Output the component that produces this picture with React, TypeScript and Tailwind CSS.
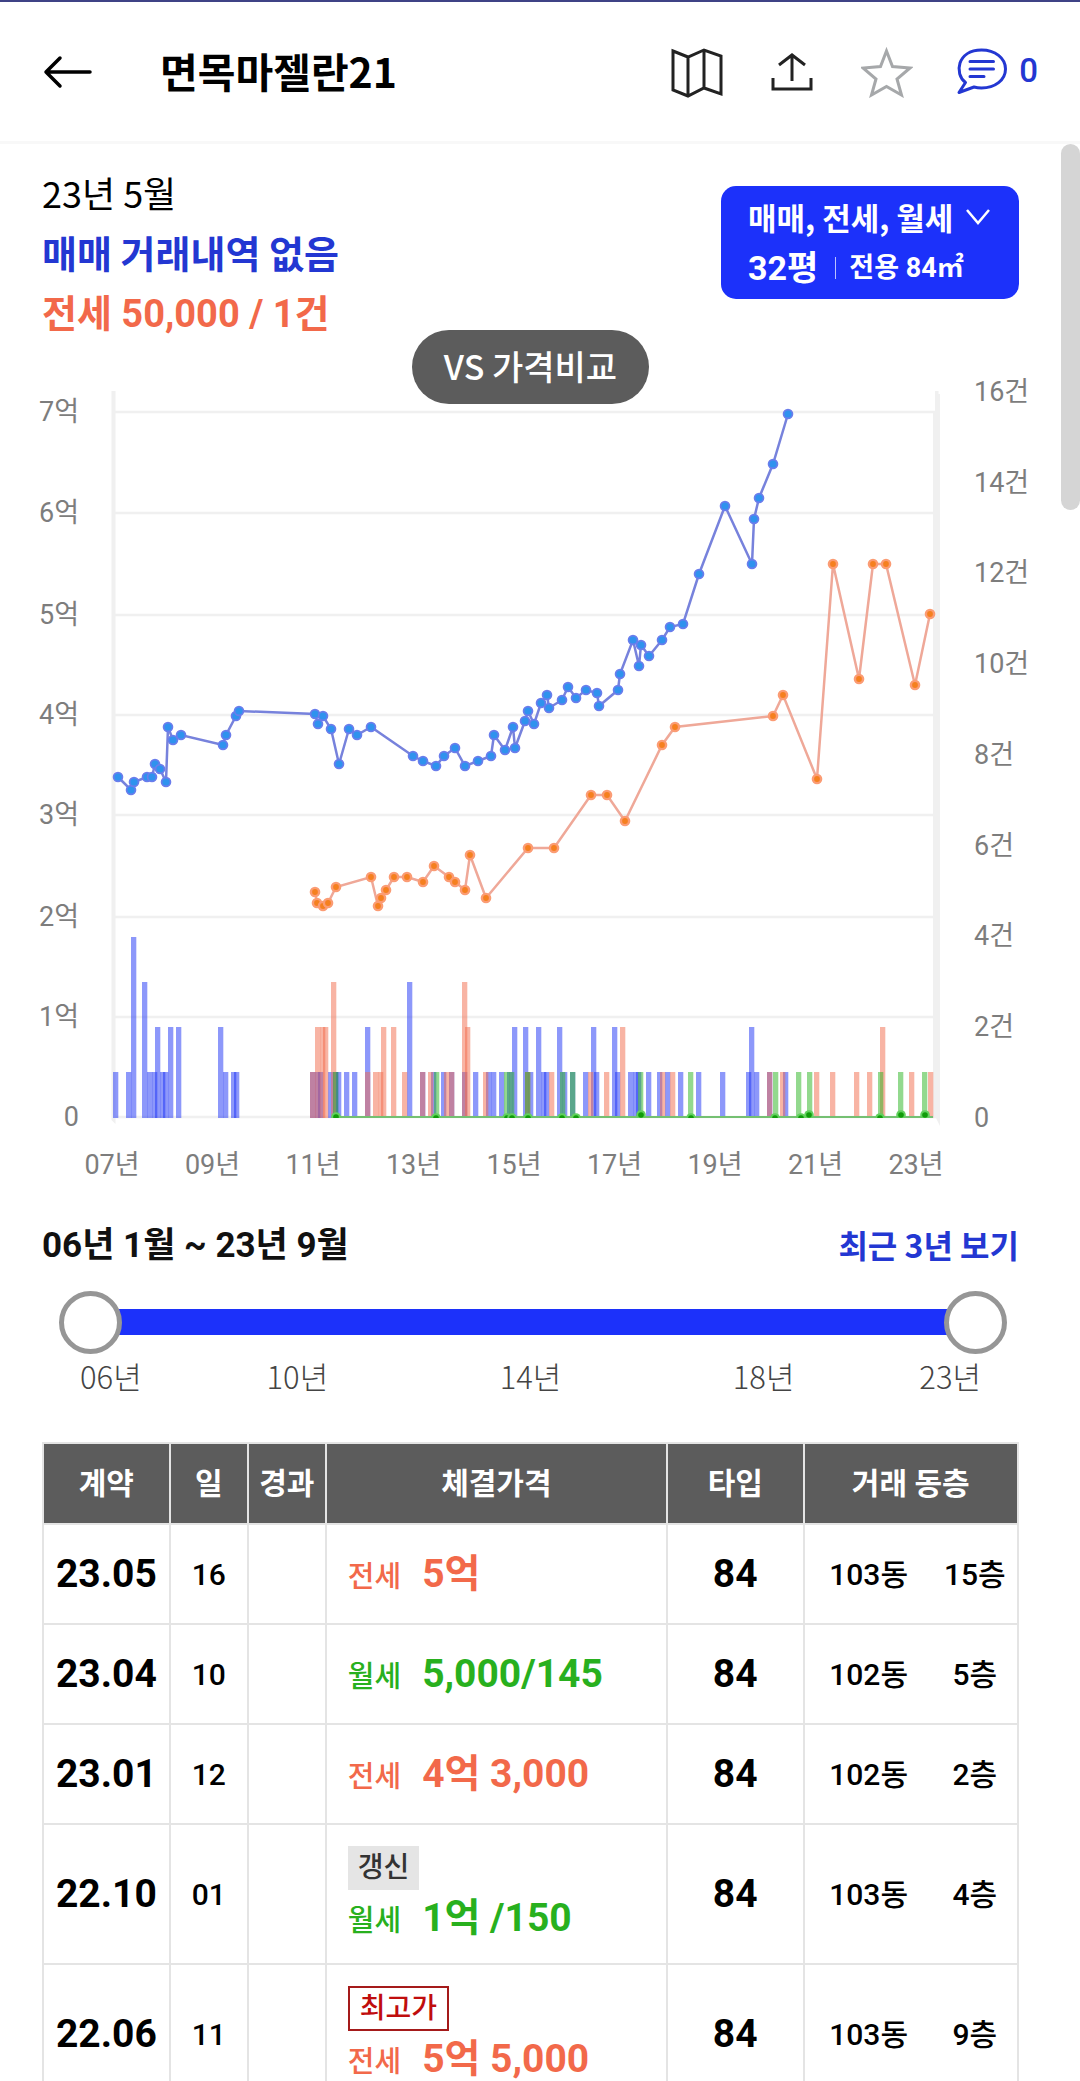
import { useState } from "react";

type Point = [number, number];

const SALE: Point[] = [
  [118, 777], [131, 790], [134, 782], [147, 777], [152, 777], [155, 764], [160, 769], [166, 782],
  [168, 727], [173, 740], [181, 735], [223, 745], [226, 735], [236, 716], [239, 711], [315, 714],
  [318, 724], [323, 716], [331, 729], [339, 764], [349, 729], [357, 735], [371, 727], [413, 756],
  [423, 761], [436, 766], [444, 756], [455, 748], [465, 766], [478, 761], [491, 756], [494, 735],
  [505, 750], [513, 727], [515, 748], [525, 721], [528, 711], [534, 724], [541, 703], [547, 695],
  [549, 708], [562, 700], [568, 687], [576, 698], [586, 690], [597, 693], [599, 706], [618, 690],
  [620, 674], [633, 640], [639, 666], [641, 645], [649, 656], [662, 640], [670, 627], [683, 624],
  [699, 574], [725, 506], [752, 564], [754, 519], [759, 498], [773, 464], [788, 414],
];

const JEONSE: Point[] = [
  [315, 892], [317, 903], [323, 906], [328, 903], [336, 887], [371, 877], [378, 906], [381, 898],
  [386, 890], [394, 877], [407, 877], [423, 882], [434, 866], [449, 877], [455, 882], [465, 890],
  [470, 855], [486, 898], [528, 848], [554, 848], [591, 795], [607, 795], [625, 821], [662, 745],
  [675, 727], [773, 716], [783, 695], [817, 779], [833, 564], [859, 679], [873, 564], [886, 564],
  [915, 685], [930, 614],
];

const MONTHLY: Point[] = [
  [336, 1117], [436, 1118], [507, 1118], [512, 1118], [528, 1118], [562, 1118], [576, 1118],
  [641, 1115], [691, 1118], [775, 1118], [801, 1118], [809, 1115], [880, 1118], [901, 1115], [925, 1115],
];

// [x, number of deals]
const SALE_BARS: Point[] = [
  [113, 1], [126, 1], [131, 4], [142, 3], [147, 1], [152, 1], [155, 2], [160, 1], [163, 1], [168, 2],
  [176, 2], [218, 2], [223, 1], [231, 1], [234, 1], [310, 1], [315, 1], [318, 1], [328, 1], [333, 1],
  [336, 1], [344, 1], [352, 1], [365, 2], [407, 3], [420, 1], [431, 1], [441, 1], [449, 1], [462, 1],
  [473, 1], [486, 1], [491, 1], [499, 1], [507, 1], [512, 2], [523, 2], [528, 1], [536, 2], [541, 1],
  [544, 1], [557, 2], [562, 1], [570, 1], [583, 1], [591, 2], [594, 1], [612, 2], [615, 1], [628, 1],
  [633, 1], [636, 1], [646, 1], [657, 1], [665, 1], [678, 1], [696, 1], [720, 1], [746, 1], [749, 2],
  [754, 1], [767, 1], [783, 1],
];

const JEONSE_BARS: Point[] = [
  [310, 1], [315, 2], [320, 2], [323, 2], [331, 3], [365, 1], [373, 1], [378, 1], [381, 2], [391, 2],
  [402, 1], [420, 1], [428, 1], [444, 1], [449, 1], [462, 3], [465, 2], [483, 1], [525, 1], [549, 1],
  [588, 1], [604, 1], [620, 2], [660, 1], [670, 1], [767, 1], [780, 1], [814, 1], [830, 1], [854, 1],
  [867, 1], [880, 2], [909, 1], [928, 1],
];

const MONTHLY_BARS: Point[] = [
  [333, 1], [434, 1], [504, 1], [509, 1], [525, 1], [560, 1], [570, 1], [638, 1], [688, 1], [773, 1],
  [796, 1], [807, 1], [878, 1], [898, 1], [922, 1],
];

const PRICE_TICKS = [
  { y: 412, label: "7억" },
  { y: 513, label: "6억" },
  { y: 615, label: "5억" },
  { y: 715, label: "4억" },
  { y: 815, label: "3억" },
  { y: 917, label: "2억" },
  { y: 1017, label: "1억" },
  { y: 1117, label: "0" },
];

const COUNT_TICKS = ["16건", "14건", "12건", "10건", "8건", "6건", "4건", "2건", "0"];
const YEAR_TICKS = ["07년", "09년", "11년", "13년", "15년", "17년", "19년", "21년", "23년"];

type Deal = {
  month: string;
  day: string;
  kind: "전세" | "월세";
  price: string;
  badge?: "갱신" | "최고가";
  dong: string;
  floor: string;
};

const DEALS: Deal[] = [
  { month: "23.05", day: "16", kind: "전세", price: "5억", dong: "103동", floor: "15층" },
  { month: "23.04", day: "10", kind: "월세", price: "5,000/145", dong: "102동", floor: "5층" },
  { month: "23.01", day: "12", kind: "전세", price: "4억 3,000", dong: "102동", floor: "2층" },
  { month: "22.10", day: "01", kind: "월세", price: "1억 /150", badge: "갱신", dong: "103동", floor: "4층" },
  { month: "22.06", day: "11", kind: "전세", price: "5억 5,000", badge: "최고가", dong: "103동", floor: "9층" },
];

const ROBOTO = "font-[Roboto,'Noto_Sans_CJK_KR',sans-serif]";

function Header() {
  return (
    <header className="flex h-[144px] shrink-0 items-center border-t-2 border-b-3 border-t-[#3f4386] border-b-[#f8f8f8] pr-[42px] pl-[43px]">
      <button type="button" aria-label="뒤로">
        <svg className="h-10 w-[50px]" viewBox="0 0 50 40" fill="none" stroke="#000" strokeWidth="3.5" strokeLinecap="round" strokeLinejoin="round">
          <path d="M47 20H3M17 6 3 20l14 14" />
        </svg>
      </button>
      <h1 className="ml-[67px] flex-1 pb-1 text-[41px] leading-[60px] font-bold">면목마젤란21</h1>
      <div className="flex items-center gap-[43px]">
        <button type="button" aria-label="지도">
          <svg className="size-[52px]" viewBox="0 0 52 52" fill="none" stroke="#222" strokeWidth="3">
            <path d="M2 5 17 11 33 4 50 10V48L33 42 17 50 2 44ZM17 11V50M33 4V42" />
          </svg>
        </button>
        <button type="button" aria-label="공유">
          <svg className="size-[52px]" viewBox="0 0 52 52" fill="none" stroke="#222" strokeWidth="3">
            <path d="M26 35V9M13 19 26 9 39 19M7 32V43H45V32" />
          </svg>
        </button>
        <button type="button" aria-label="관심단지">
          <svg className="size-[52px]" viewBox="0 0 52 52" fill="none" stroke="#a6a8aa" strokeWidth="3">
            <path d="M25.500 5 31.500 20.500 49 22 36 33 40.500 49 25.500 40.500 10.500 49 15 33 2 22 19.500 20.500Z" />
          </svg>
        </button>
        <button type="button" aria-label="댓글" className="flex items-center gap-[11px] text-[#2337d2]">
          <svg className="size-[52px]" viewBox="0 0 52 52" fill="none" stroke="currentColor" strokeWidth="3" strokeLinejoin="round" strokeLinecap="round">
            <path d="M9.500 36.500C-2 28 1 4 25.500 4C39 4 49.500 12 49.500 23C49.500 34 39 42 25.500 42Q21.500 42 18 41L3 46.500Z" />
            <path d="M14 15.500H37.500M14 23H37.500M14 30.500H28" />
          </svg>
          <span className={`${ROBOTO} pb-0.5 text-[33px] font-medium`}>0</span>
        </button>
      </div>
    </header>
  );
}

function Summary() {
  return (
    <section className="flex items-start justify-between pt-[18px] pr-[61px] pl-[42px]">
      <div className="text-[38px] leading-[60px]">
        <p className="text-[36px]">23년 5월</p>
        <p className="font-bold text-[#2337d2]">매매 거래내역 없음</p>
        <p className={`${ROBOTO} pt-0.5 font-bold text-[#f2694a]`}>전세 50,000 / 1건</p>
      </div>
      <button type="button" className="mt-6 flex h-[113px] w-[298px] flex-col justify-center rounded-[15px] bg-[#1c31fa] pl-[27px] text-left text-white">
        <span className="flex items-center gap-3 text-[31px] leading-[50px] font-bold">
          매매, 전세, 월세
          <svg className="h-[18px] w-[26px]" viewBox="0 0 26 18" fill="none" stroke="#fff" strokeWidth="2.500">
            <path d="M2 2 13 15 24 2" />
          </svg>
        </span>
        <span className={`${ROBOTO} flex items-center text-[34px] leading-[52px] font-bold`}>
          32평
          <span className="mr-[13px] ml-[17px] h-[22px] w-px bg-white/70" />
          <span className="text-[27px]">전용 84㎡</span>
        </span>
      </button>
    </section>
  );
}

function Bars({ data, fill }: { data: Point[]; fill: string }) {
  return (
    <g fill={fill} fillOpacity="0.5">
      {data.map(([x, count], i) => (
        <rect key={i} x={x} y={1117 - count * 45} width="5.300" height={count * 45 + 1} />
      ))}
    </g>
  );
}

function Line({ data, stroke, ring, dot, inner }: { data: Point[]; stroke: string; ring: string; dot: string; inner: number }) {
  return (
    <g>
      <polyline points={data.map((p) => p.join(",")).join(" ")} fill="none" stroke={stroke} strokeWidth="2.500" />
      {data.map(([x, y], i) => (
        <g key={i}>
          <circle cx={x} cy={y} r="5.300" fill={ring} />
          <circle cx={x} cy={y} r={inner} fill={dot} />
        </g>
      ))}
    </g>
  );
}

function Chart() {
  return (
    <section className="relative">
      <svg className="block w-full" viewBox="0 344 1080 846" role="img" aria-label="실거래가 추이">
        <defs>
          <clipPath id="plot">
            <rect x="110" y="380" width="830" height="738" />
          </clipPath>
        </defs>
        <g stroke="#f0f0f0" strokeWidth="2.500">
          {PRICE_TICKS.map((t) => (
            <path key={t.y} d={`M115 ${t.y}H936`} />
          ))}
        </g>
        <path d="M111.500 391H115.500V1124L111.500 1120Z" fill="#f0f0f0" />
        <path d="M935 391H938.500V394H940V1126L936 1118H933V412H935Z" fill="#f0f0f0" />
        <Bars data={SALE_BARS} fill="#1c31f5" />
        <Bars data={JEONSE_BARS} fill="#f2694a" />
        <Bars data={MONTHLY_BARS} fill="#28b41e" />
        <path d="M336 1117H933" stroke="#74c072" strokeWidth="2" />
        <g clipPath="url(#plot)">
          {MONTHLY.map(([x, y]) => (
            <g key={x}>
              <circle cx={x} cy={y} r="4.800" fill="#62d05e" />
              <circle cx={x} cy={y} r="2.800" fill="#109c0a" />
            </g>
          ))}
        </g>
        <Line data={SALE} stroke="#7782dc" ring="#6a7dec" dot="#2f92ee" inner={3.6} />
        <Line data={JEONSE} stroke="#efa898" ring="#fb9c74" dot="#f5801f" inner={2.9} />
        <g className={ROBOTO} fill="#7d7d7d" fontSize="27">
          {PRICE_TICKS.map((t) => (
            <text key={t.y} x="79" y={t.y + 9} textAnchor="end">{t.label}</text>
          ))}
          {COUNT_TICKS.map((label, i) => (
            <text key={label} x="974" y={401 + i * 90.7}>{label}</text>
          ))}
          {YEAR_TICKS.map((label, i) => (
            <text key={label} x={112 + i * 100.5} y="1174" textAnchor="middle">{label}</text>
          ))}
        </g>
      </svg>
      <div className="absolute -top-[14px] right-0 left-0 flex justify-center pr-[19px]">
        <button type="button" className="h-[74px] rounded-full bg-[#5c5c5c] px-8 pb-1 text-[34px] font-medium text-white">
          VS 가격비교
        </button>
      </div>
    </section>
  );
}

const THUMB =
  "pointer-events-none absolute inset-0 m-0 h-16 w-full appearance-none bg-transparent [&::-webkit-slider-thumb]:pointer-events-auto [&::-webkit-slider-thumb]:size-[63px] [&::-webkit-slider-thumb]:appearance-none [&::-webkit-slider-thumb]:rounded-full [&::-webkit-slider-thumb]:border-5 [&::-webkit-slider-thumb]:border-solid [&::-webkit-slider-thumb]:border-[#969696] [&::-webkit-slider-thumb]:bg-white";

function Period() {
  const [from, setFrom] = useState(0);
  const [to, setTo] = useState(212);
  return (
    <section className="pr-[61px] pl-[42px]">
      <div className="mt-8 flex items-center justify-between leading-[48px]">
        <h2 className={`${ROBOTO} text-[35px] font-bold text-[#111]`}>06년 1월 ~ 23년 9월</h2>
        <button type="button" className="pb-1 text-[32px] leading-[44px] font-bold text-[#2337d2]">최근 3년 보기</button>
      </div>
      <div className="relative mt-5 mr-3 ml-[17px] flex h-16 items-center px-8">
        <div className="h-[26px] w-full bg-[#1c31fa]" />
        <input type="range" aria-label="시작월" min="0" max="212" value={from} onChange={(e) => setFrom(+e.target.value)} className={THUMB} />
        <input type="range" aria-label="종료월" min="0" max="212" value={to} onChange={(e) => setTo(+e.target.value)} className={THUMB} />
      </div>
      <div className="mr-[38px] ml-[38px] grid grid-cols-[4fr_5fr_5fr_4fr_auto] text-[31px] leading-[44px] font-light text-[#444]">
        <span>06년</span>
        <span>10년</span>
        <span>14년</span>
        <span>18년</span>
        <span>23년</span>
      </div>
    </section>
  );
}

function DealRow({ deal }: { deal: Deal }) {
  return (
    <tr className="h-[100px] *:border-2 *:border-[#e4e4e4]">
      <td className="text-[39px] font-bold">{deal.month}</td>
      <td>{deal.day}</td>
      <td />
      <td className="pl-[21px] text-left">
        {deal.badge && (
          <div className="mt-[21px] flex pb-[3px] text-[28px] leading-[44px]">
            {deal.badge === "갱신" ? (
              <span className="bg-[#e5e5e5] px-[10px] text-[#333]">갱신</span>
            ) : (
              <span className="border-2 border-[#a41a1a] px-[10px] leading-[41px] text-[#c00d0d]">최고가</span>
            )}
          </div>
        )}
        <div
          className={`flex h-[50px] items-baseline gap-[21px] leading-[50px] ${deal.badge ? "mb-5" : ""} ${deal.kind === "전세" ? "text-[#f2694a]" : "text-[#28b01e]"}`}
        >
          <span className="text-[29px]">{deal.kind}</span>
          <span className="text-[39px] font-bold">{deal.price}</span>
        </div>
      </td>
      <td className="text-[39px] font-bold">84</td>
      <td>
        <div className="grid grid-cols-2">
          <span className="pl-[22px]">{deal.dong}</span>
          <span className="pl-[22px]">{deal.floor}</span>
        </div>
      </td>
    </tr>
  );
}

function DealTable() {
  return (
    <section className="mt-11 pr-[61px] pl-[42px]">
      <table className={`${ROBOTO} w-full table-fixed border-collapse text-center text-[30px] font-medium`}>
        <colgroup>
          <col className="w-[13%]" />
          <col className="w-[8%]" />
          <col className="w-[8%]" />
          <col className="w-[35%]" />
          <col className="w-[14%]" />
          <col className="w-[22%]" />
        </colgroup>
        <thead>
          <tr className="h-[81px] bg-[#5c5c5c] text-white *:border-2 *:border-[#e4e4e4] *:font-bold">
            <th scope="col">계약</th>
            <th scope="col">일</th>
            <th scope="col">경과</th>
            <th scope="col">체결가격</th>
            <th scope="col">타입</th>
            <th scope="col">거래 동층</th>
          </tr>
        </thead>
        <tbody>
          {DEALS.map((deal) => (
            <DealRow key={deal.month} deal={deal} />
          ))}
        </tbody>
      </table>
    </section>
  );
}

export default function App() {
  return (
    <div className="flex h-screen flex-col overflow-hidden bg-white font-['Noto_Sans_CJK_KR',sans-serif] text-black">
      <Header />
      <div className="relative min-h-0 flex-1">
        <main className="h-full overflow-y-auto [scrollbar-width:none]">
          <Summary />
          <Chart />
          <Period />
          <DealTable />
        </main>
        <div className="absolute top-0 right-0 h-[366px] w-[19px] rounded-full bg-[#d5d5d5]" />
      </div>
    </div>
  );
}
